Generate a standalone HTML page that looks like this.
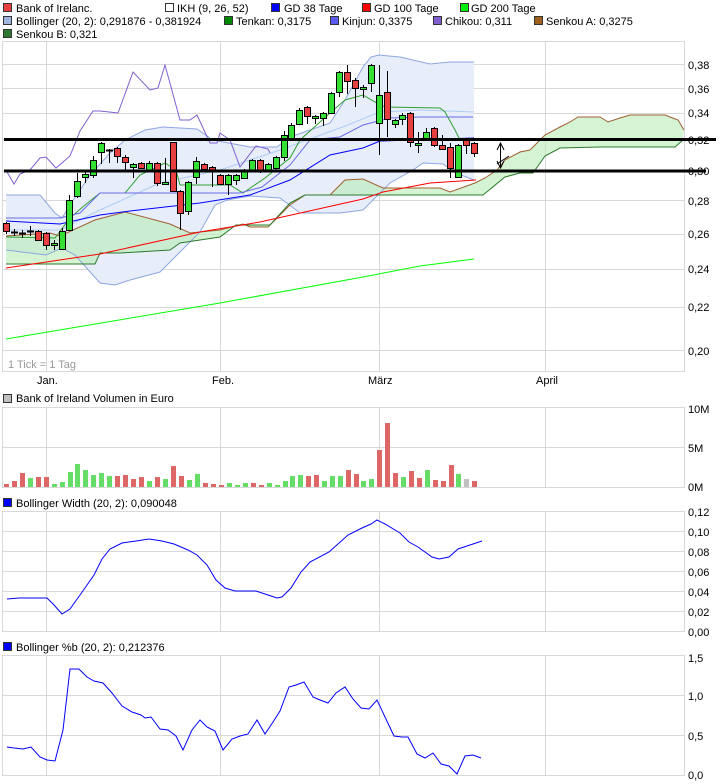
<!DOCTYPE html>
<html><head><meta charset="utf-8"><style>
body{margin:0;background:#fff;width:726px;height:784px;overflow:hidden;font-family:"Liberation Sans",sans-serif}
svg{display:block}
text{font-family:"Liberation Sans",sans-serif;font-size:11px;fill:#000}
</style></head><body>
<svg width="726" height="784" viewBox="0 0 726 784" xmlns="http://www.w3.org/2000/svg">
<!-- legend -->
<g stroke="#333" stroke-width="1">
<rect x="3.5" y="3.5" width="8" height="8" fill="#e84040"/>
<rect x="165.5" y="3.5" width="8" height="8" fill="#fff"/>
<rect x="271.5" y="3.5" width="8" height="8" fill="#0000ff"/>
<rect x="362.5" y="3.5" width="8" height="8" fill="#ff0000"/>
<rect x="460.5" y="3.5" width="8" height="8" fill="#00ee00"/>
<rect x="3.5" y="16.5" width="8" height="8" fill="#a0b4e0"/>
<rect x="224.5" y="16.5" width="8" height="8" fill="#008800"/>
<rect x="330.5" y="16.5" width="8" height="8" fill="#5a5af0"/>
<rect x="433.5" y="16.5" width="8" height="8" fill="#8060d0"/>
<rect x="534.5" y="16.5" width="8" height="8" fill="#a06020"/>
<rect x="3.5" y="29.5" width="8" height="8" fill="#307830"/>
<rect x="3.5" y="394.5" width="8" height="8" fill="#c0c0c0"/>
<rect x="3.5" y="498.5" width="8" height="8" fill="#0000ff"/>
<rect x="3.5" y="642.5" width="8" height="8" fill="#0000ff"/>
</g>
<text x="16" y="12">Bank of Irelanc.</text>
<text x="177" y="12">IKH (9, 26, 52)</text>
<text x="284" y="12">GD 38 Tage</text>
<text x="374" y="12">GD 100 Tage</text>
<text x="471" y="12">GD 200 Tage</text>
<text x="16" y="25">Bollinger (20, 2): 0,291876 - 0,381924</text>
<text x="236" y="25">Tenkan: 0,3175</text>
<text x="342" y="25">Kinjun: 0,3375</text>
<text x="445" y="25">Chikou: 0,311</text>
<text x="546" y="25">Senkou A: 0,3275</text>
<text x="16" y="38">Senkou B: 0,321</text>
<text x="16" y="402">Bank of Ireland Volumen in Euro</text>
<text x="16" y="507">Bollinger Width (20, 2): 0,090048</text>
<text x="16" y="651">Bollinger %b (20, 2): 0,212376</text>

<!-- main panel grid -->
<g stroke="#d8d8d8" stroke-width="1" fill="none">
<rect x="2.5" y="41.5" width="682" height="330"/>
<path d="M3 64.5H684M3 88.5H684M3 113.5H684M3 139.5H684M3 170.5H684M3 200.5H684M3 234.5H684M3 269.5H684M3 307.5H684M3 350.5H684"/>
<path d="M46.5 42V371M220.5 42V371M379.5 42V371M545.5 42V371"/>
</g>
<!-- bollinger fill -->
<polygon fill="#e7eefa" points="6,195 40,195 55,213 62,218 70,205 90,175 110,153 125,140 145,130 163,127 197,129 213,140 250,147 277,147 290,137 310,130 330,123 345,100 363,67 371,57 379,55 400,57 430,64 450,62 474,62 474,180 456,173 443,164 423,163 413,170 390,183 363,210 340,213 300,213 280,198 250,196 227,200 215,205 200,232 180,252 160,272 130,280 115,285 100,283 75,255 62,248 46,255 6,250"/>
<!-- cloud fill -->
<polygon fill="#b8ecb8" fill-opacity="0.6" points="6,236 50,233 60,236 95,220 125,212 170,224 190,233 220,230 243,224 250,227 268,227 290,205 305,195 330,195 345,180 363,179 383,188 440,188 450,192 475,183 485,178 497,170 505,160 520,152 530,150 545,135 560,127 570,122 578,117 600,117 608,122 620,118 630,115 665,115 670,117 678,120 684,130 683,140 675,147 600,147 560,148 545,156 533,173 520,173 505,177 483,195 363,195 305,195 290,203 270,225 236,225 220,237 180,243 170,250 120,253 100,253 95,264 6,264"/>
<g fill="none" stroke-width="1">
<polyline stroke="#8fa6e0" points="6,195 40,195 55,213 62,218 70,205 90,175 110,153 125,140 145,130 163,127 197,129 213,140 250,147 277,147 290,137 310,130 330,123 345,100 363,67 371,57 379,55 400,57 430,64 450,62 474,62"/>
<polyline stroke="#8fa6e0" points="6,250 46,255 62,248 75,255 100,283 115,285 130,280 160,272 180,252 200,232 215,205 227,200 250,196 280,198 300,213 340,213 363,210 390,183 413,170 423,163 443,164 456,173 474,180"/>
<polyline stroke="#b0ccf4" points="6,230 60,230 100,210 160,183 220,170 280,150 340,128 380,112 420,110 474,112"/>
<polyline stroke="#7f5fd0" points="7,172 14,184 20,174 30,170 40,158 46,157 56,168 70,156 80,131 93,111 100,111 118,113 133,72 150,90 158,88 165,65 180,120 190,120 197,115 210,143 217,143 220,133 230,140 240,167 256,146 268,149 270,153"/>
<polyline stroke="#30a030" points="6,237 55,238 70,218 85,205 100,193 125,193 140,175 165,163 176,170 180,185 230,185 243,193 265,178 290,158 300,140 330,113 345,100 363,95 375,102 385,107 440,108 445,112 455,130 460,140"/>
<polyline stroke="#6a6ae8" points="6,218 60,218 80,213 100,193 240,193 262,187 290,165 310,140 340,137 363,125 390,118 420,117 473,117"/>
<polyline stroke="#a06030" points="6,236 50,233 60,236 95,220 125,212 170,224 190,233 220,230 243,224 250,227 268,227 290,205 305,195 330,195 345,180 363,179 383,188 440,188 450,192 475,183 485,178 497,170 505,160 520,152 530,150 545,135 560,127 570,122 578,117 600,117 608,122 620,118 630,115 665,115 670,117 678,120 684,130"/>
<polyline stroke="#2d7a2d" points="6,264 95,264 100,253 120,253 170,250 180,243 220,237 236,225 270,225 290,203 305,195 483,195 505,177 520,173 533,173 545,156 560,148 600,147 675,147 683,140"/>
<polyline stroke="#0000ff" points="6,221 60,224 100,215 130,211 200,203 250,195 290,180 330,155 363,148 380,141 474,138"/>
<polyline stroke="#ff0000" points="6,268 100,254 200,232 260,222 363,199 383,192 430,183 476,180"/>
<polyline stroke="#00ff00" points="6,339 220,303 363,277 420,266 474,259"/>
</g>
<!-- candles -->
<g stroke="#000" stroke-width="1">
<path d="M6.5 222V234M14.5 229V236M22.5 230V238M30.5 226V236M38.5 230V241M46.5 232V250M54.5 240V250M62.5 228V250M69.5 195V231M77.5 173V198M85.5 171V183M93.5 156V178M101.5 142V164M109.5 149V163M117.5 147V163M125.5 155V170M133.5 163V178M141.5 162V169M149.5 161V171M157.5 162V186M165.5 158V185M173.5 142V192M180.5 190V230M188.5 181V215M196.5 157V184M204.5 163V171M212.5 166V187M220.5 174V185M228.5 174V195M236.5 174V185M244.5 169V179M252.5 159V171M260.5 159V173M268.5 163V171M276.5 156V169M284.5 131V161M291.5 123V139M299.5 108V125M307.5 106V124M315.5 115V124M323.5 112V126M331.5 92V114M339.5 71V97M347.5 65V94M355.5 78V107M363.5 85V98M371.5 64V92M379.5 65V155M387.5 71V137M395.5 119V128M402.5 113V125M410.5 112V147M418.5 132V153M426.5 128V141M434.5 127V147M442.5 135V150M450.5 143V178M458.5 144V178M466.5 138V154M474.5 142V157"/>
<path d="M11 232.5H18M19 233.5H26M27 231.5H34M106 150.5H113" stroke-width="2"/>
</g>
<g stroke="#000" stroke-width="1" fill="#e84040">
<rect x="3.5" y="223.5" width="6" height="8"/><rect x="35.5" y="231.5" width="6" height="9"/><rect x="43.5" y="233.5" width="6" height="12"/>
<rect x="114.5" y="148.5" width="6" height="8"/><rect x="122.5" y="157.5" width="6" height="5"/><rect x="138.5" y="163.5" width="6" height="5"/>
<rect x="154.5" y="163.5" width="6" height="20"/><rect x="170.5" y="142.5" width="6" height="49"/><rect x="177.5" y="191.5" width="6" height="22"/>
<rect x="201.5" y="164.5" width="6" height="5"/><rect x="209.5" y="167.5" width="6" height="3"/><rect x="217.5" y="175.5" width="6" height="9"/>
<rect x="257.5" y="160.5" width="6" height="10"/><rect x="304.5" y="107.5" width="6" height="9"/><rect x="344.5" y="72.5" width="6" height="9"/>
<rect x="352.5" y="80.5" width="6" height="8"/><rect x="384.5" y="92.5" width="6" height="27"/><rect x="407.5" y="113.5" width="6" height="29"/>
<rect x="431.5" y="128.5" width="6" height="17"/><rect x="439.5" y="145.5" width="6" height="4"/><rect x="447.5" y="147.5" width="6" height="21"/>
<rect x="463.5" y="140.5" width="6" height="5"/><rect x="471.5" y="143.5" width="6" height="10"/>
</g>
<g stroke="#000" stroke-width="1" fill="#33e033">
<rect x="51.5" y="243.5" width="6" height="2"/><rect x="59.5" y="231.5" width="6" height="18"/><rect x="66.5" y="200.5" width="6" height="30"/>
<rect x="74.5" y="181.5" width="6" height="15"/><rect x="82.5" y="174.5" width="6" height="3"/><rect x="90.5" y="160.5" width="6" height="15"/>
<rect x="98.5" y="143.5" width="6" height="9"/><rect x="130.5" y="164.5" width="6" height="3"/><rect x="146.5" y="163.5" width="6" height="7"/>
<rect x="162.5" y="182.5" width="6" height="2"/><rect x="185.5" y="182.5" width="6" height="29"/><rect x="193.5" y="161.5" width="6" height="16"/>
<rect x="225.5" y="175.5" width="6" height="9"/><rect x="233.5" y="175.5" width="6" height="5"/><rect x="241.5" y="170.5" width="6" height="8"/>
<rect x="249.5" y="160.5" width="6" height="10"/><rect x="265.5" y="164.5" width="6" height="6"/><rect x="273.5" y="157.5" width="6" height="11"/>
<rect x="281.5" y="135.5" width="6" height="22"/><rect x="288.5" y="125.5" width="6" height="13"/><rect x="296.5" y="110.5" width="6" height="14"/>
<rect x="312.5" y="116.5" width="6" height="2"/><rect x="320.5" y="113.5" width="6" height="5"/><rect x="328.5" y="93.5" width="6" height="20"/>
<rect x="336.5" y="72.5" width="6" height="20"/><rect x="360.5" y="87.5" width="6" height="2"/><rect x="368.5" y="65.5" width="6" height="18"/>
<rect x="376.5" y="95.5" width="6" height="28"/><rect x="392.5" y="120.5" width="6" height="4"/><rect x="399.5" y="115.5" width="6" height="4"/>
<rect x="415.5" y="143.5" width="6" height="2"/><rect x="423.5" y="132.5" width="6" height="8"/><rect x="455.5" y="145.5" width="6" height="32"/>
</g>
<!-- support lines -->
<path d="M4 139.5H716M4 171H706" stroke="#000" stroke-width="3"/>
<g stroke="#000" stroke-width="1" fill="none">
<path d="M500.5 143V168M497 150L500.5 143L504 150M497 161L500.5 168L504 161M497 164L509 156"/>
</g>
<!-- main axis labels -->
<text x="688" y="69">0,38</text><text x="688" y="93">0,36</text><text x="688" y="117">0,34</text>
<text x="688" y="144">0,32</text><text x="688" y="175">0,30</text><text x="688" y="205">0,28</text>
<text x="688" y="238">0,26</text><text x="688" y="273">0,24</text><text x="688" y="311">0,22</text><text x="688" y="355">0,20</text>
<text x="8" y="368" style="fill:#999">1 Tick = 1 Tag</text>
<text x="37" y="384">Jan.</text><text x="212" y="384">Feb.</text><text x="368" y="384">März</text><text x="536" y="384">April</text>

<!-- volume panel -->
<g stroke="#d8d8d8" fill="none">
<rect x="2.5" y="407.5" width="682" height="80"/>
<path d="M3 447.5H684M46.5 408V487M220.5 408V487M379.5 408V487M545.5 408V487"/>
</g>
<g>
<g fill="#dd6666">
<rect x="4" y="484" width="5" height="3"/><rect x="12" y="481" width="5" height="6"/><rect x="20" y="473" width="5" height="14"/>
<rect x="36" y="477" width="5" height="10"/><rect x="44" y="477" width="5" height="10"/>
<rect x="115" y="476" width="5" height="11"/><rect x="123" y="475" width="5" height="12"/><rect x="131" y="479" width="5" height="8"/><rect x="139" y="477" width="5" height="10"/>
<rect x="155" y="477" width="5" height="10"/><rect x="171" y="466" width="5" height="21"/><rect x="179" y="476" width="5" height="11"/>
<rect x="203" y="483" width="5" height="4"/><rect x="211" y="484" width="5" height="3"/><rect x="219" y="485" width="5" height="2"/>
<rect x="251" y="483" width="5" height="4"/><rect x="259" y="485" width="5" height="2"/>
<rect x="306" y="476" width="5" height="11"/><rect x="314" y="475" width="5" height="12"/>
<rect x="346" y="470" width="5" height="17"/><rect x="354" y="474" width="5" height="13"/>
<rect x="377" y="450" width="5" height="37"/><rect x="385" y="423" width="5" height="64"/><rect x="393" y="473" width="5" height="14"/>
<rect x="409" y="471" width="5" height="16"/><rect x="417" y="478" width="5" height="9"/>
<rect x="433" y="480" width="5" height="7"/><rect x="441" y="481" width="5" height="6"/><rect x="449" y="465" width="5" height="22"/>
<rect x="472" y="481" width="5" height="6"/>
</g>
<g fill="#66dd66">
<rect x="28" y="478" width="5" height="9"/><rect x="52" y="484" width="5" height="3"/><rect x="60" y="482" width="5" height="5"/>
<rect x="68" y="472" width="5" height="15"/><rect x="75" y="464" width="5" height="23"/><rect x="83" y="470" width="5" height="17"/>
<rect x="91" y="475" width="5" height="12"/><rect x="99" y="473" width="5" height="14"/><rect x="107" y="476" width="5" height="11"/>
<rect x="147" y="481" width="5" height="6"/><rect x="163" y="479" width="5" height="8"/><rect x="187" y="480" width="5" height="7"/>
<rect x="195" y="474" width="5" height="13"/><rect x="227" y="483" width="5" height="4"/><rect x="235" y="485" width="5" height="2"/>
<rect x="243" y="483" width="5" height="4"/><rect x="267" y="483" width="5" height="4"/><rect x="275" y="485" width="5" height="2"/>
<rect x="283" y="481" width="5" height="6"/><rect x="290" y="476" width="5" height="11"/><rect x="298" y="475" width="5" height="12"/>
<rect x="322" y="481" width="5" height="6"/><rect x="330" y="476" width="5" height="11"/><rect x="338" y="476" width="5" height="11"/>
<rect x="361" y="481" width="5" height="6"/><rect x="369" y="479" width="5" height="8"/><rect x="401" y="477" width="5" height="10"/>
<rect x="425" y="470" width="5" height="17"/><rect x="456" y="474" width="5" height="13"/>
</g>
<rect x="464" y="479" width="5" height="8" fill="#c0c0c0"/>
</g>
<text x="688" y="413">10M</text><text x="688" y="452">5M</text><text x="688" y="491">0M</text>

<!-- bollinger width -->
<g stroke="#d8d8d8" fill="none">
<rect x="2.5" y="511.5" width="682" height="120"/>
<path d="M3 531.5H684M3 551.5H684M3 571.5H684M3 591.5H684M3 611.5H684M46.5 512V631M220.5 512V631M379.5 512V631M545.5 512V631"/>
</g>
<polyline fill="none" stroke="#0000ff" points="7,599 19,598 47,598 54,605 62,614 70,609 80,595 94,575 102,559 110,549 122,543 136,541 149,539 162,541 174,544 188,550 197,555 207,565 216,580 225,588 235,591 256,591 268,595 277,598 282,597 291,588 301,572 310,562 329,552 348,535 362,528 371,524 377,520 385,524 400,533 409,542 418,547 432,557 439,559 449,557 458,549 470,545 482,541"/>
<text x="688" y="516">0,12</text><text x="688" y="536">0,10</text><text x="688" y="556">0,08</text><text x="688" y="576">0,06</text>
<text x="688" y="596">0,04</text><text x="688" y="616">0,02</text><text x="688" y="636">0,00</text>

<!-- bollinger %b -->
<g stroke="#d8d8d8" fill="none">
<rect x="2.5" y="655.5" width="682" height="120"/>
<path d="M3 695.5H684M3 735.5H684M46.5 656V775M220.5 656V775M379.5 656V775M545.5 656V775"/>
</g>
<polyline fill="none" stroke="#0000ff" points="7,747 14,748 23,749 31,747 40,757 47,760 55,761 63,730 70,669 79,669 87,677 94,681 103,683 112,693 122,706 132,712 141,715 145,718 151,717 160,729 168,730 176,736 183,750 192,730 200,720 207,727 215,731 223,750 232,739 240,736 248,734 257,720 265,734 273,722 280,711 289,687 296,685 304,682 313,697 320,700 328,703 336,693 345,687 353,699 361,708 369,709 377,700 385,717 394,736 402,737 408,737 417,754 425,758 433,753 441,764 449,766 457,774 465,756 473,755 481,758"/>
<text x="688" y="662">1,5</text><text x="688" y="700">1,0</text><text x="688" y="740">0,5</text><text x="688" y="779">0,0</text>
</svg>
</body></html>
